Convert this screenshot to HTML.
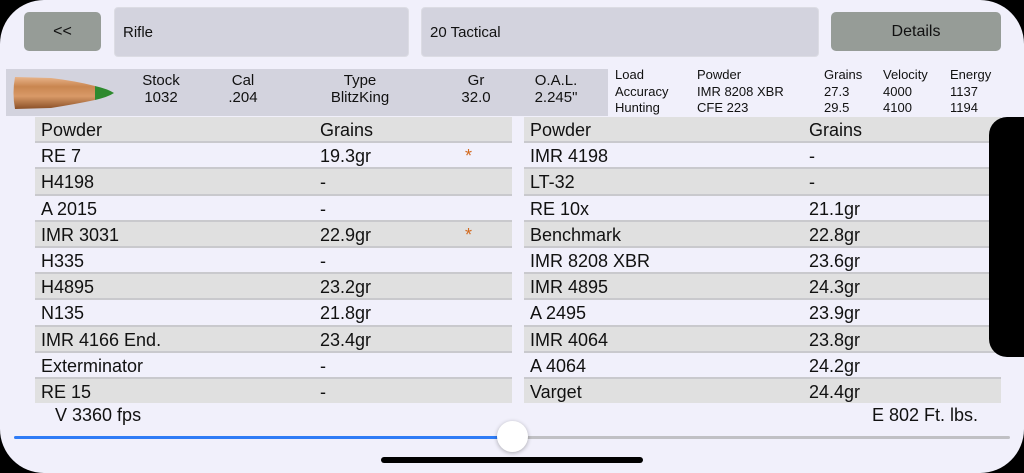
<!DOCTYPE html>
<html><head><meta charset="utf-8"><style>
*{margin:0;padding:0;box-sizing:border-box}
body{width:1024px;height:473px;background:#000;position:relative;overflow:hidden;font-family:"Liberation Sans",sans-serif;color:#111}
.screen{position:absolute;left:0;top:0;width:1024px;height:473px;background:#f1f0fb;border-radius:44px;}
.notch{position:absolute;left:989px;top:117px;width:40px;height:240px;background:#000;border-radius:18px 0 0 18px}
.btn{position:absolute;top:12px;height:39px;background:#969c97;border-radius:5px;font-size:16px;display:flex;align-items:center;justify-content:center}
.fld{position:absolute;top:7px;height:50px;background:#d3d3de;border:1px solid #dcdce4;border-radius:4px;font-size:15px;padding-left:8px;display:flex;align-items:center}
.band{position:absolute;left:6px;top:69px;width:602px;height:47px;background:#d3d3de}
.c{position:absolute;text-align:center;font-size:15px;line-height:17px}
.info{position:absolute;font-size:13px;line-height:16.5px;top:67px}
.tbl{position:absolute;top:117px;width:477px}
.row{height:26.2px;position:relative;font-size:18px;border-bottom:2px solid #c9c9cd}
.row.g{background:#e0e0e0}
.row span{position:absolute;top:3px}
.star{color:#d2691e}
</style></head><body>
<div class="screen">
<div class="btn" style="left:24px;width:77px">&lt;&lt;</div>
<div class="fld" style="left:114px;width:295px">Rifle</div>
<div class="fld" style="left:421px;width:398px">20 Tactical</div>
<div class="btn" style="left:831px;width:170px">Details</div>
<div class="band">
<svg width="104" height="40" style="position:absolute;left:5px;top:4px" viewBox="0 0 104 40">
<defs><linearGradient id="cu" x1="0" y1="0" x2="0" y2="1"><stop offset="0" stop-color="#e8b48a"/><stop offset=".3" stop-color="#c98650"/><stop offset=".6" stop-color="#d99a68"/><stop offset="1" stop-color="#8a5028"/></linearGradient></defs>
<path d="M4 4 Q1 20 4 36 L40 35 Q65 31 84 27 L84 13 Q65 8 40 5 Z" fill="url(#cu)"/>
<path d="M84 13 Q97 16 103 20 Q97 24 84 27 Z" fill="#2e8a2e"/>
</svg>
<div class="c" style="left:128px;width:54px;top:3px">Stock<br>1032</div>
<div class="c" style="left:212px;width:50px;top:3px">Cal<br>.204</div>
<div class="c" style="left:314px;width:80px;top:3px">Type<br>BlitzKing</div>
<div class="c" style="left:450px;width:40px;top:3px">Gr<br>32.0</div>
<div class="c" style="left:520px;width:60px;top:3px">O.A.L.<br>2.245"</div>
</div>
<div class="info" style="left:615px">Load<br>Accuracy<br>Hunting</div>
<div class="info" style="left:697px">Powder<br>IMR 8208 XBR<br>CFE 223</div>
<div class="info" style="left:824px">Grains<br>27.3<br>29.5</div>
<div class="info" style="left:883px">Velocity<br>4000<br>4100</div>
<div class="info" style="left:950px">Energy<br>1137<br>1194</div>
<div class="tbl" style="left:35px">
<div class="row g"><span style="left:6px">Powder</span><span style="left:285px">Grains</span></div>
<div class="row"><span style="left:6px">RE 7</span><span style="left:285px">19.3gr</span><span class="star" style="left:430px">*</span></div>
<div class="row g"><span style="left:6px">H4198</span><span style="left:285px">-</span></div>
<div class="row"><span style="left:6px">A 2015</span><span style="left:285px">-</span></div>
<div class="row g"><span style="left:6px">IMR 3031</span><span style="left:285px">22.9gr</span><span class="star" style="left:430px">*</span></div>
<div class="row"><span style="left:6px">H335</span><span style="left:285px">-</span></div>
<div class="row g"><span style="left:6px">H4895</span><span style="left:285px">23.2gr</span></div>
<div class="row"><span style="left:6px">N135</span><span style="left:285px">21.8gr</span></div>
<div class="row g"><span style="left:6px">IMR 4166 End.</span><span style="left:285px">23.4gr</span></div>
<div class="row"><span style="left:6px">Exterminator</span><span style="left:285px">-</span></div>
<div class="row g" style="border-bottom:none;height:24px;overflow:hidden"><span style="left:6px">RE 15</span><span style="left:285px">-</span></div>
</div>
<div class="tbl" style="left:524px">
<div class="row g"><span style="left:6px">Powder</span><span style="left:285px">Grains</span></div>
<div class="row"><span style="left:6px">IMR 4198</span><span style="left:285px">-</span></div>
<div class="row g"><span style="left:6px">LT-32</span><span style="left:285px">-</span></div>
<div class="row"><span style="left:6px">RE 10x</span><span style="left:285px">21.1gr</span></div>
<div class="row g"><span style="left:6px">Benchmark</span><span style="left:285px">22.8gr</span></div>
<div class="row"><span style="left:6px">IMR 8208 XBR</span><span style="left:285px">23.6gr</span></div>
<div class="row g"><span style="left:6px">IMR 4895</span><span style="left:285px">24.3gr</span></div>
<div class="row"><span style="left:6px">A 2495</span><span style="left:285px">23.9gr</span></div>
<div class="row g"><span style="left:6px">IMR 4064</span><span style="left:285px">23.8gr</span></div>
<div class="row"><span style="left:6px">A 4064</span><span style="left:285px">24.2gr</span></div>
<div class="row g" style="border-bottom:none;height:24px;overflow:hidden"><span style="left:6px">Varget</span><span style="left:285px">24.4gr</span></div>
</div>
<div style="position:absolute;left:55px;top:405px;font-size:18px">V 3360 fps</div>
<div style="position:absolute;right:46px;top:405px;font-size:18px">E 802 Ft. lbs.</div>
<div style="position:absolute;left:14px;top:436px;width:498px;height:3px;background:#2f7cf6;border-radius:2px"></div>
<div style="position:absolute;left:512px;top:436px;width:498px;height:3px;background:#c0c0c4;border-radius:2px"></div>
<div style="position:absolute;left:497px;top:421px;width:31px;height:31px;background:#fff;border-radius:50%;box-shadow:0 1px 4px rgba(0,0,0,.3)"></div>
<div style="position:absolute;left:381px;top:457px;width:262px;height:6px;background:#000;border-radius:3px"></div>
</div>
<div class="notch"></div>
</body></html>
